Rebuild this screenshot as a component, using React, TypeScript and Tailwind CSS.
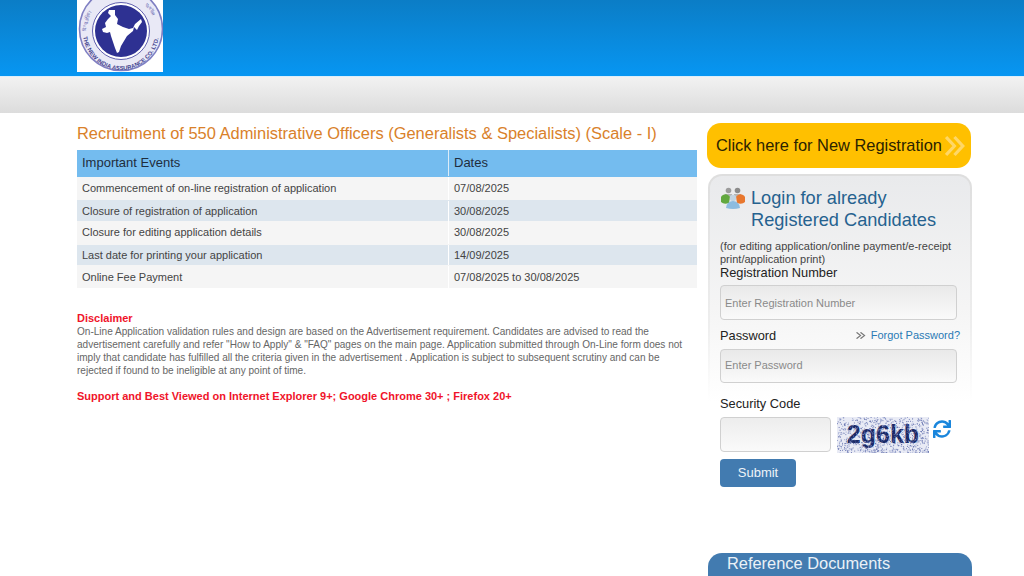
import { FaSync } from "react-icons/fa";

const events = [
  ["Commencement of on-line registration of application", "07/08/2025", "h-[23px]", "bg-[#f5f5f5]"],
  ["Closure of registration of application", "30/08/2025", "h-[21px] pt-[1px]", "bg-[#dde6ee]"],
  ["Closure for editing application details", "30/08/2025", "h-[24px] pb-[1px]", "bg-[#f5f5f5]"],
  ["Last date for printing your application", "14/09/2025", "h-[20px]", "bg-[#dde6ee]"],
  ["Online Fee Payment", "07/08/2025 to 30/08/2025", "h-[23px] pt-[1px]", "bg-[#f5f5f5]"],
];

// captcha speckle, fixed seed so the picture stays the same
const rnd = (n: number) => {
  const v = Math.sin(n * 12.9898) * 43758.5453;
  return v - Math.floor(v);
};
const specks = Array.from({ length: 900 }, (_, i) => ({
  x: rnd(i + 1) * 92,
  y: rnd(i + 5000) * 36,
  c: rnd(i + 9000) > 0.5 ? "#5a68a8" : "#8a96c6",
}));

function Logo() {
  return (
    <svg viewBox="0 0 86 72" className="block h-[72px] w-[86px] bg-white">
      <defs>
        <path id="ringLow" d="M 6 32 A 38 38 0 0 0 82 32" />
        <path id="ringLeft" d="M 9 31 A 35 35 0 0 1 20 5.5" />
        <path id="ringRight" d="M 68 5.5 A 35 35 0 0 1 79 31" />
      </defs>
      <circle cx="44" cy="29" r="41.5" fill="#e9e9f6" stroke="#7f7fc2" strokeWidth="1.6" />
      <circle cx="44" cy="31" r="28.5" fill="#fff" stroke="#5f5fae" strokeWidth="1" />
      <circle cx="44" cy="31" r="26" fill="#2e3192" />
      <text fontFamily="Liberation Sans, sans-serif" fontSize="5.8" fontWeight="700" fill="#45458f">
        <textPath href="#ringLow" startOffset="4%">THE NEW INDIA ASSURANCE CO. LTD.</textPath>
      </text>
      <text fontFamily="Liberation Sans, sans-serif" fontSize="4.5" fill="#5f5fae">
        <textPath href="#ringLeft">दि न्यू इंडिया</textPath>
      </text>
      <text fontFamily="Liberation Sans, sans-serif" fontSize="4.5" fill="#5f5fae">
        <textPath href="#ringRight">एश्योरेंस</textPath>
      </text>
      <path
        fill="#fff"
        d="M32 10 L38 10 L38 15 L41 19 L40 24 L46 27 L52 29 L56 28 L58 24 L64 19 L65 22 L62 26 L60 30 L57 27 L56 31 L50 36 L47 41 L44 46 L42 52 L40 53 L38 48 L36 42 L34 36 L33 32 L30 33 L26 32 L25 29 L29 27 L28 23 L31 19 L34 16 L31 13 Z"
      />
    </svg>
  );
}

function UsersIcon() {
  return (
    <svg viewBox="0 0 24 22" className="h-[22px] w-[24px] shrink-0">
      <circle cx="7.5" cy="3.5" r="2.8" fill="#9c9c9c" />
      <circle cx="16.5" cy="3.5" r="2.8" fill="#8b8b8b" />
      <path d="M4 7 h7 v3 h-7z M13 7 h7 v3 h-7z" fill="#b5b5b5" />
      <path d="M0 15 a5 5 0 0 1 9-5 l-1 6 q-5 2-8-1z" fill="#62a83f" />
      <path d="M24 15 a5 5 0 0 0-9-5 l1 6 q5 2 8-1z" fill="#e8772e" />
      <circle cx="12" cy="11" r="3.2" fill="#c2d4e2" />
      <path d="M5 21 a7 7 0 0 1 14 0 q-7 2-14 0z" fill="#8dbce0" />
    </svg>
  );
}

function Chevrons({ className }: { className: string }) {
  return (
    <svg viewBox="0 0 20 20" preserveAspectRatio="none" fill="none" stroke="currentColor" className={className}>
      <path d="M1 1 L9 10 L1 19 M9 1 L17 10 L9 19" strokeWidth="3" />
    </svg>
  );
}

function Captcha() {
  return (
    <div className="relative h-[36px] w-[92px] shrink-0 overflow-hidden bg-[#e9ebf5]">
      <span className="absolute inset-0 flex items-center justify-center font-['Liberation_Sans',sans-serif] text-[25px] font-bold text-[#1b2a66]">
        2g6kb
      </span>
      <svg viewBox="0 0 92 36" className="absolute inset-0 h-full w-full">
        {specks.map((s, i) => (
          <rect key={i} x={s.x} y={s.y} width="0.9" height="0.9" fill={s.c} />
        ))}
      </svg>
    </div>
  );
}

const inputCls =
  "flex w-[237px] items-center rounded-[4px] border border-[#d0d0d0] bg-gradient-to-b from-[#e9e9e9] to-[#fafafa] pl-[4px] text-[11px] text-[#8a8a8a]";

export default function App() {
  return (
    <div className="h-[576px] w-[1024px] overflow-hidden bg-white font-['Liberation_Sans',Arial,sans-serif]">
      <header className="h-[76px] bg-gradient-to-b from-[#0b7dc6] to-[#0796f2] pl-[77px]">
        <Logo />
      </header>
      <div className="h-[37px] border-t border-[#dbeefb] bg-gradient-to-b from-[#f2f2f2] to-[#dcdcdc]" />

      <main className="flex gap-[10px] pl-[77px]">
        <section className="w-[620px] pt-[10px]">
          <h1 className="text-[16.45px] leading-[20px] whitespace-nowrap text-[#d9812a]">
            Recruitment of 550 Administrative Officers (Generalists &amp; Specialists) (Scale - I)
          </h1>
          <div className="mt-[7px] flex h-[27px] bg-[#74bcef] pb-[1px] text-[13px] text-[#1f2d3d]">
            <div className="flex w-[372px] items-center border-r border-[#dcecf8] pl-[5px]">Important Events</div>
            <div className="flex items-center pl-[5px]">Dates</div>
          </div>
          {events.map(([name, date, h, bg]) => (
            <div key={name} className={`flex text-[11px] text-[#444] ${h} ${bg}`}>
              <div className="flex w-[372px] items-center border-r border-white pl-[5px]">{name}</div>
              <div className="flex items-center pl-[5px]">{date}</div>
            </div>
          ))}
          <h2 className="mt-[24px] text-[11px] leading-[13px] font-bold text-[#f0142a]">Disclaimer</h2>
          <p className="w-[610px] text-[10.05px] leading-[13px] text-[#666]">
            On-Line Application validation rules and design are based on the Advertisement requirement. Candidates are advised to read the advertisement carefully and refer "How to Apply" &amp; "FAQ" pages on the main page. Application submitted through On-Line form does not imply that candidate has fulfilled all the criteria given in the advertisement . Application is subject to subsequent scrutiny and can be rejected if found to be ineligible at any point of time.
          </p>
          <p className="mt-[13px] text-[11px] leading-[13px] font-bold whitespace-nowrap text-[#f0142a]">
            Support and Best Viewed on Internet Explorer 9+; Google Chrome 30+ ; Firefox 20+
          </p>
        </section>

        <aside className="w-[264px] pt-[10px]">
          <a className="flex h-[45px] items-center justify-between rounded-[14px] bg-[#ffc000] pr-[5px] pl-[9px] text-[16.4px] whitespace-nowrap text-[#2b2300]">
            Click here for New Registration
            <Chevrons className="h-[20px] w-[21px] text-[#ffd766]" />
          </a>

          <div className="mt-[6px] mr-[-1px] ml-[1px] h-[379px] rounded-t-[14px] bg-gradient-to-b from-[#dedede] via-[#eeeeee] via-40% to-white to-60% px-[2px] pt-[2px]">
            <div className="h-full rounded-t-[12px] bg-gradient-to-b from-[#e9eaec] via-[#f5f5f5] via-35% to-white to-60% px-[10px] pt-[11px]">
              <div className="flex gap-[6px] pl-[1px]">
                <UsersIcon />
                <h2 className="text-[18.2px] leading-[22px] whitespace-nowrap text-[#26628f]">
                  Login for already
                  <br />
                  Registered Candidates
                </h2>
              </div>
              <p className="mt-[9px] text-[11px] leading-[13px] text-[#444]">
                (for editing application/online payment/e-receipt print/application print)
              </p>
              <label className="-mt-[1px] block text-[12.8px] leading-[15px] text-[#222]">Registration Number</label>
              <div className={`mt-[5px] h-[35px] pt-[1px] ${inputCls}`}>Enter Registration Number</div>
              <div className="mt-[7px] flex items-center justify-between">
                <label className="text-[12.8px] leading-[15px] text-[#222]">Password</label>
                <span className="flex items-center gap-[5px] text-[11px] text-[#2a7ab5]">
                  <Chevrons className="h-[7px] w-[10px] text-[#777]" />
                  Forgot Password?
                </span>
              </div>
              <div className={`mt-[5px] h-[34px] ${inputCls}`}>Enter Password</div>
              <label className="mt-[13px] block text-[12.8px] leading-[15px] text-[#222]">Security Code</label>
              <div className="mt-[6px] flex items-start gap-[6px]">
                <div className="h-[35px] w-[111px] rounded-[4px] border border-[#d0d0d0] bg-gradient-to-b from-[#ededed] to-[#fafafa]" />
                <Captcha />
                <FaSync size={18} className="mt-[3px] ml-[-2px] text-[#1a86dc]" />
              </div>
              <button className="mt-[6px] block h-[28px] w-[76px] rounded-[4px] bg-[#427bb0] text-[13px] text-[#eef3f8]">Submit</button>
            </div>
          </div>

          <div className="mr-[-1px] ml-[1px] h-[40px] rounded-t-[14px] bg-[#427bb0] pt-[1px] pl-[19px] text-[16.4px] leading-[19px] text-[#eaf1f7]">
            Reference Documents
          </div>
        </aside>
      </main>
    </div>
  );
}
